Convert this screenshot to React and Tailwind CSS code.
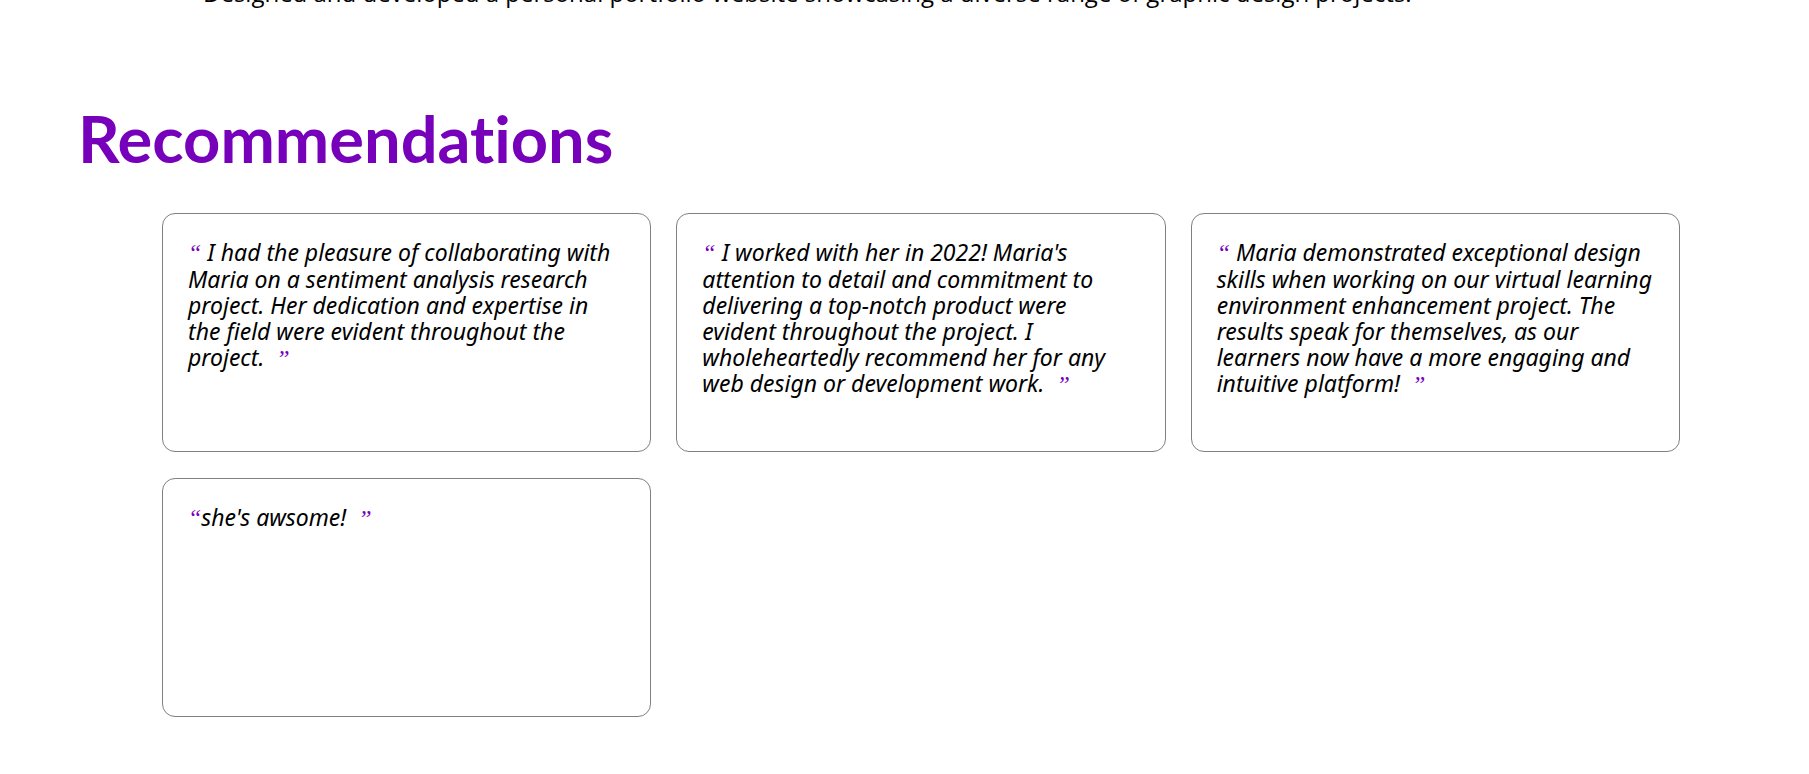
const recommendations = [
  " I had the pleasure of collaborating with Maria on a sentiment analysis research project. Her dedication and expertise in the field were evident throughout the project. ",
  " I worked with her in 2022! Maria's attention to detail and commitment to delivering a top-notch product were evident throughout the project. I wholeheartedly recommend her for any web design or development work. ",
  " Maria demonstrated exceptional design skills when working on our virtual learning environment enhancement project. The results speak for themselves, as our learners now have a more engaging and intuitive platform! ",
  "she's awsome! ",
];

function Mark({ children }) {
  return <span className="font-['Liberation_Serif',serif] text-[24px] text-[#7700bb]">{children}</span>;
}

function Recommendation({ text }) {
  return (
    <li className="min-h-[239px] rounded-[13px] border border-[#808080] px-[25px] pt-[25px] pb-6">
      <blockquote className="text-[23px] leading-[26px] italic">
        <Mark>“</Mark>
        {text}
        <Mark>{"\u00a0”"}</Mark>
      </blockquote>
    </li>
  );
}

export default function App() {
  return (
    <main className="overflow-hidden bg-white font-['Noto_Sans',sans-serif] text-black">
      <section aria-label="Projects" className="-mt-6 pl-[203px]">
        <p className="font-['Open_Sans',sans-serif] text-[24px] leading-[34px]">
          Designed and developed a personal portfolio website showcasing a diverse range of graphic
          design projects.
        </p>
      </section>
      <section aria-labelledby="recommendations" className="pt-[86px] pr-[129px] pb-14 pl-[78px]">
        <h2
          id="recommendations"
          className="font-['Lato',sans-serif] text-[65px] leading-[84px] font-bold text-[#7700bb] [font-variant-ligatures:none]"
        >
          Recommendations
        </h2>
        <ul className="mt-[33px] ml-[84px] grid grid-cols-3 gap-x-[25px] gap-y-[26px]">
          {recommendations.map((text) => (
            <Recommendation key={text} text={text} />
          ))}
        </ul>
      </section>
    </main>
  );
}
